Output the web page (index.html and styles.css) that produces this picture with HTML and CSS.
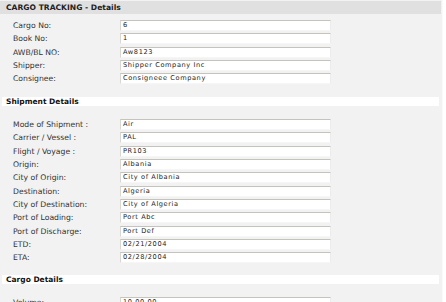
FILE: index.html
```html
<!DOCTYPE html>
<html lang="en">
<head>
    <meta charset="UTF-8">
    <title>Cargo Tracking - Details</title>
    <link rel="stylesheet" href="styles.css">
</head>
<body>

<div class="panel">
    <div class="title">CARGO TRACKING - Details</div>

    <div class="fields first">
        <label>Cargo No:</label><div class="box">6</div>
        <label>Book No:</label><div class="box">1</div>
        <label>AWB/BL NO:</label><div class="box">Aw8123</div>
        <label>Shipper:</label><div class="box">Shipper Company Inc</div>
        <label>Consignee:</label><div class="box">Consigneee Company</div>
    </div>

    <div class="section">Shipment Details</div>

    <div class="fields">
        <label>Mode of Shipment :</label><div class="box">Air</div>
        <label>Carrier / Vessel :</label><div class="box">PAL</div>
        <label>Flight / Voyage :</label><div class="box">PR103</div>
        <label>Origin:</label><div class="box">Albania</div>
        <label>City of Origin:</label><div class="box">City of Albania</div>
        <label>Destination:</label><div class="box">Algeria</div>
        <label>City of Destination:</label><div class="box">City of Algeria</div>
        <label>Port of Loading:</label><div class="box">Port Abc</div>
        <label>Port of Discharge:</label><div class="box">Port Def</div>
        <label>ETD:</label><div class="box">02/21/2004</div>
        <label>ETA:</label><div class="box">02/28/2004</div>
    </div>

    <div class="section cargo">Cargo Details</div>

    <div class="fields">
        <label>Volume:</label><div class="box">10.00.00</div>
    </div>
</div>

</body>
</html>
```

FILE: styles.css
```css
body {
    margin: 0;
    background: #ffffff;
    font-family: "DejaVu Sans", Verdana, sans-serif;
    color: #333;
}
.panel {
    width: 443px;
    min-height: 302px;
    background: #f2f2f2;
    border-right: 1px solid #fafafa;
    padding-top: 1px;
    box-sizing: border-box;
}
.title {
    height: 13px;
    width: 441px;
    background: #e0e0e0;
    font-size: 7.6px;
    font-weight: bold;
    color: #222;
    line-height: 13px;
    padding-left: 6px;
    box-sizing: border-box;
}
.fields {
    display: grid;
    grid-template-columns: 120px 211px;
    grid-auto-rows: 11px;
    row-gap: 2.33px;
    margin-top: 13px;
}
.fields.first {
    margin-top: 6px;
}
.fields label {
    padding-left: 13px;
    font-size: 7.7px;
    line-height: 11px;
    color: #333;
    white-space: nowrap;
}
.box {
    background: #fff;
    border-top: 1px solid #c4c4bc;
    border-left: 1px solid #d8d8d0;
    border-right: 1px solid #ececec;
    border-bottom: 1px solid #f6f6f6;
    box-sizing: border-box;
    font-size: 6.6px;
    letter-spacing: 0.6px;
    line-height: 9px;
    padding-left: 2px;
    color: #222;
    white-space: nowrap;
    overflow: hidden;
}
.section {
    margin: 12.7px 0 0 2px;
    width: 437px;
    height: 9px;
    background: #fff;
    font-size: 7.5px;
    font-weight: bold;
    color: #111;
    line-height: 9px;
    padding-left: 4px;
    box-sizing: border-box;
}
.section.cargo {
    margin-top: 11.7px;
}
```
